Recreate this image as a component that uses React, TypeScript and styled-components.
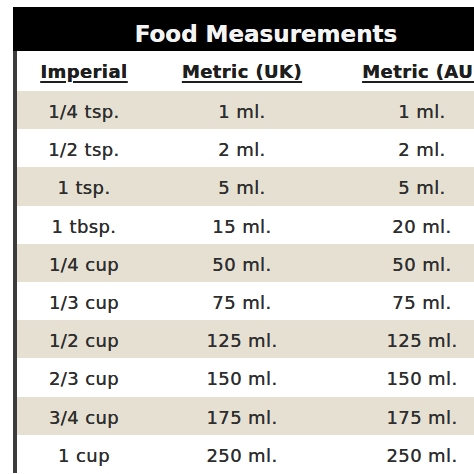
import styled, {createGlobalStyle} from "styled-components";

const GlobalStyle = createGlobalStyle`
  html, body {
    margin: 0;
    padding: 0;
    background: #fff;
    overflow: hidden;
  }
  body {
    font-family: "DejaVu Sans", Verdana, sans-serif;
  }
`

const Page = styled.div`
  padding: 7px 0 0 13px;
  width: 474px;
  height: 474px;
  box-sizing: border-box;
  overflow: hidden;
`

const Table = styled.div`
  width: 506px;
  border-left: 4px solid #3c3c3c;
  box-sizing: border-box;
`

const Title = styled.h1`
  margin: 0 0 0 -4px;
  height: 44px;
  padding-top: 14px;
  box-sizing: border-box;
  background: #000;
  color: #f4f4f4;
  font-size: 23px;
  line-height: 27px;
  font-weight: bold;
  text-align: center;
  text-shadow: 0 0 0.6px #f4f4f4;
`

const Row = styled.div<{ $striped?: boolean; $head?: boolean }>`
  display: grid;
  grid-template-columns: 134px 182px 178px;
  align-items: center;
  height: ${p => (p.$head ? '40px' : '38.2px')};
  padding-top: ${p => (p.$head ? '0' : '3px')};
  box-sizing: border-box;
  background: ${p => (p.$striped ? '#e5e0d2' : '#fff')};
`

const HeadCell = styled.div`
  text-align: center;
  font-size: 18px;
  font-weight: bold;
  letter-spacing: 0.4px;
  color: #1e1e1e;
  text-decoration: underline;
  text-underline-offset: 3px;
  text-decoration-thickness: 2px;
  white-space: nowrap;
  text-shadow: 0 0 0.5px #1e1e1e;
`

const Cell = styled.div`
  text-align: center;
  font-size: 18px;
  letter-spacing: 0.4px;
  color: #2e2e2e;
  white-space: nowrap;
  text-shadow: 0 0 0.6px #2e2e2e;
`

const rows: [string, string, string][] = [
  ['1/4 tsp.', '1 ml.', '1 ml.'],
  ['1/2 tsp.', '2 ml.', '2 ml.'],
  ['1 tsp.', '5 ml.', '5 ml.'],
  ['1 tbsp.', '15 ml.', '20 ml.'],
  ['1/4 cup', '50 ml.', '50 ml.'],
  ['1/3 cup', '75 ml.', '75 ml.'],
  ['1/2 cup', '125 ml.', '125 ml.'],
  ['2/3 cup', '150 ml.', '150 ml.'],
  ['3/4 cup', '175 ml.', '175 ml.'],
  ['1 cup', '250 ml.', '250 ml.'],
]

const App = () => {
  return (
    <Page>
      <GlobalStyle/>
      <Table>
        <Title>Food Measurements</Title>
        <Row $head>
          <HeadCell>Imperial</HeadCell>
          <HeadCell>Metric (UK)</HeadCell>
          <HeadCell>Metric (AU)</HeadCell>
        </Row>
        {rows.map((r, i) => (
          <Row key={r[0]} $striped={i % 2 === 0}>
            <Cell>{r[0]}</Cell>
            <Cell>{r[1]}</Cell>
            <Cell>{r[2]}</Cell>
          </Row>
        ))}
      </Table>
    </Page>
  )
}

export default App;
